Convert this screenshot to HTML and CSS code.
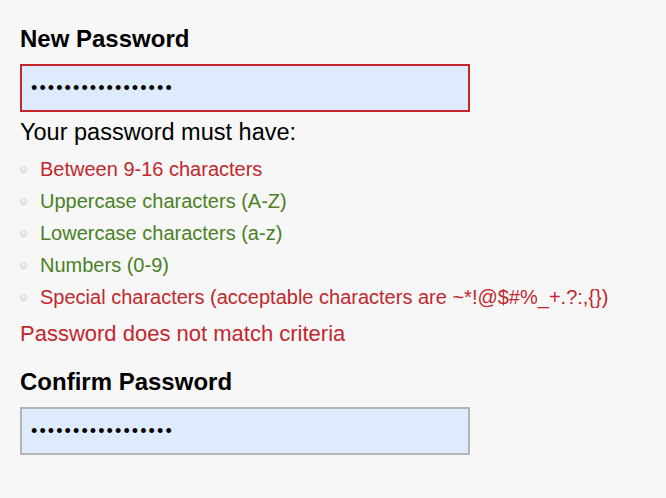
FILE: index.html
```
<html>
<head>
<link rel="stylesheet" href="styles.css">
<title>Change password</title>
</head>
<body>
<div class="wrap">
	<label class="label" for="pw1">New Password</label>
	<input class="field bad" type="password" id="pw1" value="abcdefghijklmnopq" />

	<div class="rules">
		<div class="intro">Your password must have:</div>
		<ul class="checks">
			<li class="no">Between 9-16 characters</li>
			<li class="ok">Uppercase characters (A-Z)</li>
			<li class="ok">Lowercase characters (a-z)</li>
			<li class="ok">Numbers (0-9)</li>
			<li class="no">Special characters (acceptable characters are ~*!@$#%_+.?:,{})</li>
		</ul>
		<div class="error">Password does not match criteria</div>
	</div>

	<label class="label second" for="pw2">Confirm Password</label>
	<input class="field" type="password" id="pw2" value="abcdefghijklmnopq" />
</div>
</body>
</html>
```
FILE: styles.css
```
body{margin:0; background:#f7f7f7; font-family:"Liberation Sans", Arial, sans-serif; color:#000;}
.wrap{padding:25px 20px 0 20px;}

.label{display:block; font-size:24px; font-weight:bold; line-height:28px;}
.label.second{margin-top:21px;}

.field{
	display:block;
	box-sizing:border-box;
	width:450px;
	height:48px;
	margin-top:11px;
	padding:0 9px;
	border:2px solid #b4b4b4;
	background:#deebfc;
	font-family:"Liberation Sans", Arial, sans-serif;
	font-size:18px;
	letter-spacing:2.1px;
	color:#000;
	outline:none;
}
.field.bad{border-color:#c1272d;}

.intro{margin-top:7px; font-size:23.5px; line-height:27px;}

.checks{list-style:none; margin:7px 0 0 0; padding:0;}
.checks li{
	display:flex;
	align-items:center;
	gap:13px;
	font-size:20px;
	line-height:32px;
}
.checks li:before{
	content:"";
	flex:none;
	width:7px;
	height:7px;
	margin-top:1px;
	border-radius:50%;
	background:radial-gradient(circle at 50% 45%, #f4f4f4 0, #dedede 55%, #c4c4c4 100%);
}
.checks .ok{color:#4a8126;}
.checks .no{color:#c1272d;}

.error{margin-top:8px; font-size:22px; line-height:26px; color:#c1272d;}
```
